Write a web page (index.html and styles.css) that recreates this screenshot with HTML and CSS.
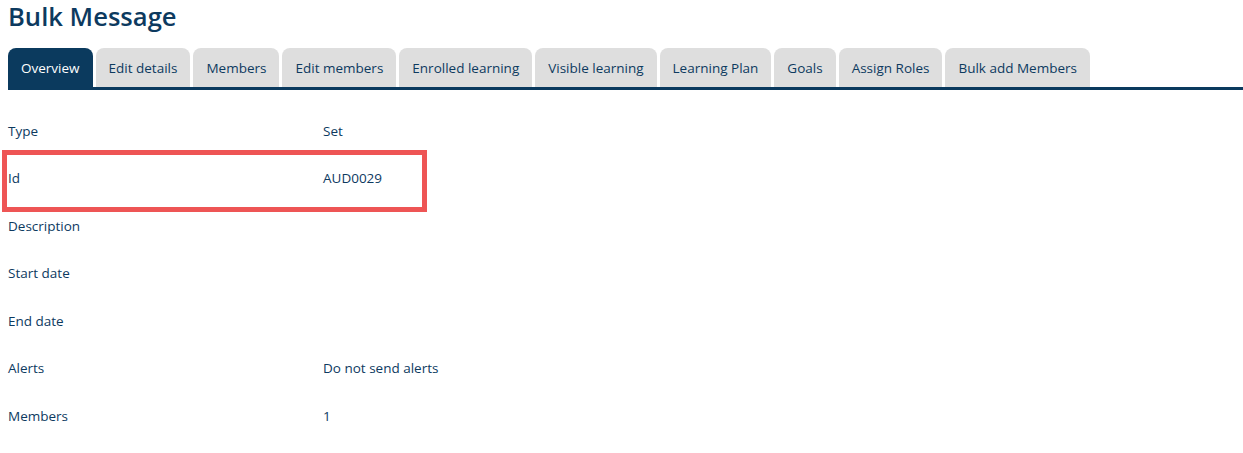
FILE: index.html
```html
<!DOCTYPE html>
<html>
<head>
<meta charset="utf-8">
<link rel="stylesheet" href="styles.css">
</head>
<body>
<div class="page">
  <h1 class="title">Bulk Message</h1>
  <nav class="tabs">
    <a class="tab active">Overview</a>
    <a class="tab">Edit details</a>
    <a class="tab">Members</a>
    <a class="tab">Edit members</a>
    <a class="tab">Enrolled learning</a>
    <a class="tab">Visible learning</a>
    <a class="tab">Learning Plan</a>
    <a class="tab">Goals</a>
    <a class="tab">Assign Roles</a>
    <a class="tab">Bulk add Members</a>
  </nav>
  <div class="details">
    <div class="row"><span class="label">Type</span><span class="value">Set</span></div>
    <div class="row"><span class="label">Id</span><span class="value">AUD0029</span></div>
    <div class="row"><span class="label">Description</span><span class="value"></span></div>
    <div class="row"><span class="label">Start date</span><span class="value"></span></div>
    <div class="row"><span class="label">End date</span><span class="value"></span></div>
    <div class="row"><span class="label">Alerts</span><span class="value">Do not send alerts</span></div>
    <div class="row"><span class="label">Members</span><span class="value">1</span></div>
    <div class="highlight"></div>
  </div>
</div>
</body>
</html>
```

FILE: styles.css
```css
html, body {
  margin: 0;
  padding: 0;
  background: #ffffff;
}
body {
  font-family: "Open Sans", "Noto Sans", sans-serif;
  color: #0d3a5f;
}
.page {
  padding-left: 8px;
}
.title {
  margin: 0;
  height: 48px;
  font-size: 25.6px;
  font-weight: 600;
  line-height: 33px;
  color: #0d3a5f;
}
.tabs {
  display: flex;
  gap: 3px;
  border-bottom: 3px solid #0b3a5e;
  height: 39px;
  align-items: flex-end;
}
.tab {
  display: block;
  height: 39px;
  line-height: 40px;
  padding: 0 13px;
  background: #dedede;
  border-top-left-radius: 8px;
  border-top-right-radius: 8px;
  font-size: 13.5px;
  color: #0d3a5f;
  white-space: nowrap;
}
.tab.active {
  background: #0b3a5e;
  color: #ffffff;
}
.details {
  position: relative;
  padding-top: 17px;
}
.row {
  display: flex;
  height: 47.5px;
  align-items: center;
  font-size: 13.5px;
}
.label {
  width: 315px;
}
.highlight {
  position: absolute;
  left: -6px;
  top: 60px;
  width: 415px;
  height: 52px;
  border: 5px solid #ee5555;
}
```
